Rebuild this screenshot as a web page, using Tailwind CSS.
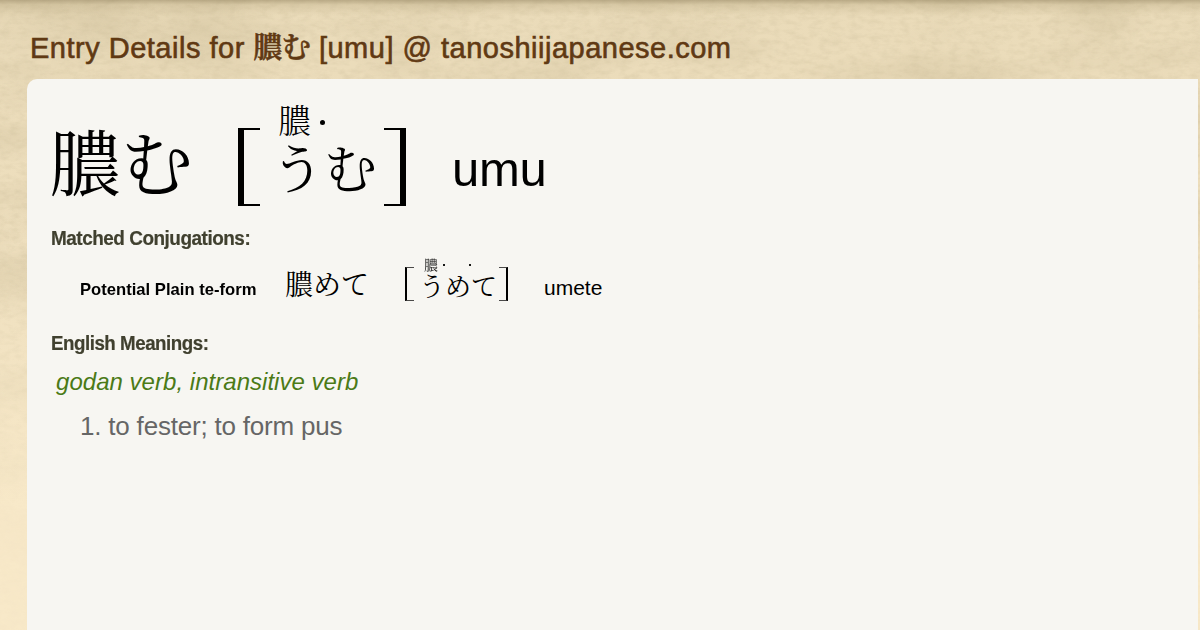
<!DOCTYPE html>
<html lang="en">
<head>
  <meta charset="UTF-8" />
  <title>Entry Details for 膿む [umu]</title>
  <meta name="viewport" content="width=device-width, initial-scale=1.0" />
  <script src="https://cdn.jsdelivr.net/npm/@tailwindcss/browser@4"></script>
</head>
<body class="relative isolate h-[630px] overflow-hidden bg-[#f7e8c8] font-['Liberation_Sans','Noto_Serif_CJK_JP','Noto_Sans_CJK_JP',sans-serif] whitespace-nowrap text-black">
  <!-- paper texture -->
  <div class="absolute inset-0 -z-10 bg-linear-to-b from-[#eadbb9] via-[#eedfbe] via-40% to-[#f8e9c9] to-80%"></div>
  <svg class="absolute inset-0 -z-10 h-full w-full" aria-hidden="true">
    <defs>
      <filter id="blotches" x="0" y="0" width="100%" height="100%">
        <feTurbulence type="fractalNoise" baseFrequency="0.008 0.016" numOctaves="4" seed="8" />
        <feColorMatrix values="0 0 0 0 0.55  0 0 0 0 0.46  0 0 0 0 0.28  0.8 0 0 0 -0.32" />
      </filter>
      <filter id="grain" x="0" y="0" width="100%" height="100%">
        <feTurbulence type="fractalNoise" baseFrequency="0.1 0.2" numOctaves="3" seed="3" />
        <feColorMatrix values="0 0 0 0 0.5  0 0 0 0 0.42  0 0 0 0 0.25  0.4 0 0 0 -0.16" />
      </filter>
      <linearGradient id="fade" x1="0" y1="0" x2="0" y2="1">
        <stop offset="0" stop-color="#fff" />
        <stop offset="0.35" stop-color="#fff" />
        <stop offset="0.8" stop-color="#fff" stop-opacity="0.15" />
      </linearGradient>
      <mask id="fadeMask"><rect width="1200" height="630" fill="url(#fade)" /></mask>
    </defs>
    <g mask="url(#fadeMask)">
      <rect width="1200" height="630" filter="url(#blotches)" />
      <rect width="1200" height="630" filter="url(#grain)" />
    </g>
  </svg>
  <div class="absolute inset-x-0 top-0 -z-10 h-4 bg-linear-to-b from-[#8b7b56]/50 via-[#a89870]/25 via-30% to-transparent"></div>

  <h1 class="h-[79px] pt-[31px] pl-[30px] text-[29px] leading-[34px] tracking-[0.5px] text-[#603913] [-webkit-text-stroke:0.6px_#603913]">Entry Details for <span class="font-semibold tracking-[-0.5px]">膿む</span> [umu] @ tanoshiijapanese.com</h1>

  <main class="ml-[27px] h-[551px] w-[1171px] rounded-tl-[10px] bg-[#f7f6f2] pl-6">
    <!-- headword -->
    <section class="flex h-[139px] items-start">
      <div class="mt-[51px] -ml-[2px] w-[189px] text-[72px] leading-[70px] font-normal">膿む</div>
      <div class="mt-[49px] h-[78px] w-[22px] border-y-2 border-l-[6px] border-black"></div>
      <div class="mt-[27px] ml-[17px] w-[107px]">
        <div class="flex h-[32px] items-center gap-[4px] pl-px text-[33px] leading-[32px] font-light">膿<span class="ml-[5px] size-[5px] rounded-full bg-black"></span></div>
        <div class="mt-[6px] -ml-[6px] text-[53px] leading-[54px] font-normal">うむ</div>
      </div>
      <div class="mt-[49px] h-[78px] w-[22px] border-y-2 border-r-[6px] border-black"></div>
      <div class="mt-[62px] ml-[46px] text-[49px] leading-[56px] tracking-[-0.3px]">umu</div>
    </section>

    <h2 class="h-[46px] origin-left scale-x-[0.946] pt-[8px] text-[20px] leading-[24px] font-bold tracking-[-0.5px] text-[#40402f] [-webkit-text-stroke:0.2px_#40402f]">Matched Conjugations:</h2>
    <section class="flex h-[67px] items-start pl-[29px]">
      <div class="mt-[16px] w-[205px] origin-left scale-x-[0.978] text-[17px] leading-[20px] font-bold">Potential Plain te-form</div>
      <div class="mt-[8px] w-[120px] text-[28px] leading-[28px] font-normal">膿めて</div>
      <div class="mt-[3px] h-[34px] w-[9px] border-y border-l-2 border-y-black/70 border-l-black"></div>
      <div class="-mt-[6px] ml-[8px] w-[77px]">
        <div class="flex h-[14px] items-center pl-[2px] text-[14px] leading-[14px] font-normal opacity-90">膿<span class="ml-[5px] size-[2px] bg-black"></span><span class="ml-[24px] size-[2px] bg-black"></span></div>
        <div class="mt-[2px] -ml-[3px] text-[26px] leading-[26px] font-normal">うめて</div>
      </div>
      <div class="mt-[3px] h-[34px] w-[9px] border-y border-r-2 border-y-black/70 border-r-black"></div>
      <div class="mt-[12px] ml-[36px] text-[21px] leading-[24px]">umete</div>
    </section>

    <h2 class="h-[37px] origin-left scale-x-[0.936] text-[20px] leading-[24px] font-bold tracking-[-0.5px] text-[#40402f] [-webkit-text-stroke:0.2px_#40402f]">English Meanings:</h2>
    <p class="h-[43px] pl-[5px] text-[24px] leading-[28px] tracking-[0.03px] text-[#4b7a17] italic">godan verb, intransitive verb</p>
    <ol class="pl-[29px] text-[26px] leading-[30px] tracking-[-0.2px] text-[#666]">
      <li>1. to fester; to form pus</li>
    </ol>
  </main>
</body>
</html>
